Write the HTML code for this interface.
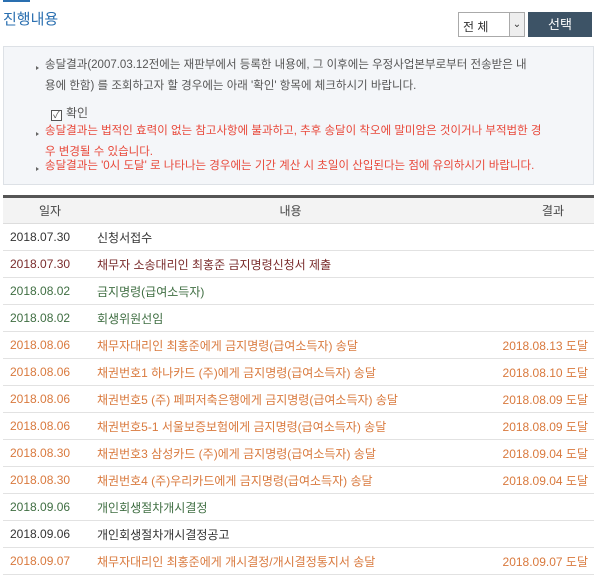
<!DOCTYPE html>
<html><head><meta charset="utf-8"><style>
*{margin:0;padding:0;box-sizing:border-box}
body{width:600px;height:579px;background:#fff;font-family:"Liberation Sans","Noto Sans CJK KR",sans-serif;font-size:12px;color:#333;position:relative;overflow:hidden}
.bar{position:absolute;left:3px;top:0;width:27px;height:2px;background:#2a6fb0}
.title{position:absolute;left:3px;top:8px;font-size:15px;color:#2a6fb0}
.sel{position:absolute;left:458px;top:12px;width:67px;height:25px;border:1px solid #aaa;background:#fff;font-size:12px;padding:5px 0 0 4px;color:#333}
.sel .ar{position:absolute;right:0;top:0;width:15px;height:23px;border-left:1px solid #aaa;background:#eee;font-size:10px;text-align:center;line-height:23px}
.btn{position:absolute;left:528px;top:12px;width:64px;height:25px;background:#3d5366;color:#fff;text-align:center;line-height:25px;font-size:13px}
.box{position:absolute;left:3px;top:46px;width:591px;height:139px;background:#f4f6f9;border:1px solid #dde1e6;font-size:11.5px;line-height:21px;color:#555}
.box p{position:absolute;left:41px;white-space:nowrap}
.box p:before{content:"";position:absolute;left:-9px;top:11px;border-left:3px solid #666;border-top:2.5px solid transparent;border-bottom:2.5px solid transparent}
.box .red{color:#e8483a}
.chk{position:absolute;left:47px;top:56px;font-size:12px}
.chk span{display:inline-block;width:11px;height:11px;border:1px solid #555;background:#fff;font-size:10px;line-height:9px;text-align:center;vertical-align:-1px;margin-right:4px}
table{position:absolute;left:3px;top:195px;width:591px;border-collapse:collapse;border-top:3px solid #555}
th{background:#f3f3f3;height:27px;font-weight:normal;font-size:12px;color:#444;border-bottom:1px solid #ddd}
td{height:27px;border-bottom:1px solid #e2e2e2;font-size:12px;white-space:nowrap}
td.d{padding-left:7px;width:94px}
td.r{text-align:right;padding-right:6px}
.k{color:#333}.b{color:#7a2c2c}.g{color:#3f6e42}.o{color:#d9793d}
</style></head><body>
<div class="bar"></div>
<div class="title">진행내용</div>
<div class="sel">전 체<div class="ar">&#8964;</div></div>
<div class="btn">선택</div>
<div class="box">
<p style="top:8px">송달결과(2007.03.12전에는 재판부에서 등록한 내용에, 그 이후에는 우정사업본부로부터 전송받은 내<br>용에 한함) 를 조회하고자 할 경우에는 아래 '확인' 항목에 체크하시기 바랍니다.</p>
<div class="chk"><span>✓</span>확인</div>
<p class="red" style="top:74px">송달결과는 법적인 효력이 없는 참고사항에 불과하고, 추후 송달이 착오에 말미암은 것이거나 부적법한 경<br>우 변경될 수 있습니다.</p>
<p class="red" style="top:109px">송달결과는 '0시 도달' 로 나타나는 경우에는 기간 계산 시 초일이 산입된다는 점에 유의하시기 바랍니다.</p>
</div>
<table>
<tr><th style="width:94px">일자</th><th>내용</th><th style="width:110px;text-align:right;padding-right:30px">결과</th></tr>
<tr class="k"><td class="d">2018.07.30</td><td>신청서접수</td><td class="r"></td></tr>
<tr class="b"><td class="d">2018.07.30</td><td>채무자 소송대리인 최홍준 금지명령신청서 제출</td><td class="r"></td></tr>
<tr class="g"><td class="d">2018.08.02</td><td>금지명령(급여소득자)</td><td class="r"></td></tr>
<tr class="g"><td class="d">2018.08.02</td><td>회생위원선임</td><td class="r"></td></tr>
<tr class="o"><td class="d">2018.08.06</td><td>채무자대리인 최홍준에게 금지명령(급여소득자) 송달</td><td class="r">2018.08.13 도달</td></tr>
<tr class="o"><td class="d">2018.08.06</td><td>채권번호1 하나카드 (주)에게 금지명령(급여소득자) 송달</td><td class="r">2018.08.10 도달</td></tr>
<tr class="o"><td class="d">2018.08.06</td><td>채권번호5 (주) 페퍼저축은행에게 금지명령(급여소득자) 송달</td><td class="r">2018.08.09 도달</td></tr>
<tr class="o"><td class="d">2018.08.06</td><td>채권번호5-1 서울보증보험에게 금지명령(급여소득자) 송달</td><td class="r">2018.08.09 도달</td></tr>
<tr class="o"><td class="d">2018.08.30</td><td>채권번호3 삼성카드 (주)에게 금지명령(급여소득자) 송달</td><td class="r">2018.09.04 도달</td></tr>
<tr class="o"><td class="d">2018.08.30</td><td>채권번호4 (주)우리카드에게 금지명령(급여소득자) 송달</td><td class="r">2018.09.04 도달</td></tr>
<tr class="g"><td class="d">2018.09.06</td><td>개인회생절차개시결정</td><td class="r"></td></tr>
<tr class="k"><td class="d">2018.09.06</td><td>개인회생절차개시결정공고</td><td class="r"></td></tr>
<tr class="o"><td class="d">2018.09.07</td><td>채무자대리인 최홍준에게 개시결정/개시결정통지서 송달</td><td class="r">2018.09.07 도달</td></tr>
</table>
</body></html>
